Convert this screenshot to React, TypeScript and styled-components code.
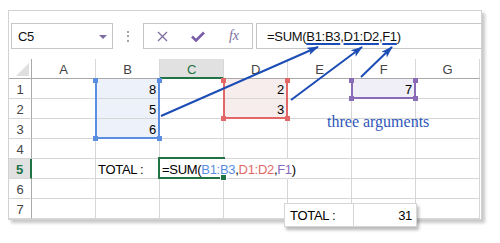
import React from "react";
import styled, { createGlobalStyle, css } from "styled-components";

const GlobalStyle = createGlobalStyle`
  html, body { margin: 0; padding: 0; background: #ffffff; }
  body { font-family: "Liberation Sans", Arial, sans-serif; }
`;

const C = {
  grid: "#d6d6d6",
  head: "#a9a9a9",
  green: "#217346",
  blue: "#5b8ee1",
  red: "#e26868",
  purple: "#8a6bb5",
  arrow: "#1c4cb5",
  icon: "#7d6d9e",
};

const FILL: Record<string, string> = {
  blue: "#edf1fa",
  red: "#f8eded",
  purple: "#f0eff7",
};

const Page = styled.div`
  position: relative;
  width: 500px;
  height: 243px;
  padding: 10px 0 0 8px;
  box-sizing: border-box;
  overflow: hidden;
`;

const Window = styled.div`
  width: 474px;
  border: 1px solid #d2d2d2;
  box-sizing: border-box;
  background: #fff;
  box-shadow: 3px 3px 3px rgba(0, 0, 0, 0.22);
`;

const FormulaBar = styled.div`
  display: flex;
  align-items: flex-start;
  height: 48px;
  padding: 12px 0 10px 2px;
  box-sizing: border-box;
`;

const boxBase = css`
  height: 26px;
  border: 1px solid #c6c6c6;
  box-sizing: border-box;
  font-size: 13px;
  letter-spacing: -0.3px;
  color: #111;
`;

const NameBox = styled.div`
  ${boxBase};
  width: 102px;
  display: flex;
  align-items: center;
  justify-content: space-between;
  padding: 1px 5px 0 6px;
`;

const DropArrow = styled.span`
  width: 0;
  height: 0;
  border-left: 4px solid transparent;
  border-right: 4px solid transparent;
  border-top: 4px solid ${C.icon};
`;

const Separator = styled.div`
  width: 30px;
  height: 26px;
  display: flex;
  flex-direction: column;
  align-items: center;
  justify-content: center;
  gap: 2.5px;
`;

const Dot = styled.span`
  width: 2px;
  height: 2px;
  background: #a3a3a3;
`;

const ButtonsBox = styled.div`
  ${boxBase};
  width: 110px;
  display: flex;
`;

const BarButton = styled.div`
  flex: 1;
  display: flex;
  align-items: center;
  justify-content: center;
`;

const Fx = styled.span`
  font-family: "Liberation Serif", "Times New Roman", serif;
  font-style: italic;
  font-size: 14px;
  color: ${C.icon};
  letter-spacing: 0;
`;

const FormulaBox = styled.div`
  ${boxBase};
  flex: 1;
  margin-left: 3px;
  border-right: none;
  padding: 2px 0 0 10px;
  line-height: 22px;
  white-space: nowrap;
`;

const Under = styled.span`
  text-decoration: underline;
  text-decoration-color: ${C.arrow};
  text-decoration-thickness: 2px;
  text-underline-offset: 2px;
`;

const Grid = styled.div`
  position: relative;
  display: grid;
  grid-template-columns: 23px repeat(7, 64px);
  grid-auto-rows: 20px;
  font-size: 13px;
  letter-spacing: -0.3px;
`;

const cellBase = css`
  box-sizing: border-box;
  border-right: 1px solid ${C.grid};
  border-bottom: 1px solid ${C.grid};
  display: flex;
  white-space: nowrap;
`;

const Corner = styled.div`
  ${cellBase};
  position: relative;
  border-right-color: ${C.head};
  border-bottom-color: ${C.head};
  &::after {
    content: "";
    position: absolute;
    right: 2px;
    bottom: 2px;
    width: 0;
    height: 0;
    border-left: 13px solid transparent;
    border-bottom: 13px solid #dfdfdf;
  }
`;

const ColHead = styled.div<{ $active?: boolean }>`
  ${cellBase};
  align-items: center;
  justify-content: center;
  padding-top: 1px;
  color: #444;
  border-right-color: #d8d8d8;
  border-bottom-color: ${C.head};
  ${(p) =>
    p.$active &&
    css`
      background: #e1e1e1;
      color: ${C.green};
      border-bottom: 2px solid ${C.green};
      padding-top: 2px;
    `}
`;

const RowHead = styled.div<{ $active?: boolean }>`
  ${cellBase};
  align-items: center;
  justify-content: center;
  padding-top: 1px;
  color: #444;
  border-right-color: ${C.head};
  ${(p) =>
    p.$active &&
    css`
      background: #e1e1e1;
      color: ${C.green};
      font-weight: bold;
      border-right: 2px solid ${C.green};
    `}
`;

const Cell = styled.div<{ $fill?: string; $align?: "left" | "right"; $hideRight?: boolean }>`
  ${cellBase};
  align-items: flex-end;
  line-height: 16px;
  color: #000;
  background: ${(p) => (p.$fill ? FILL[p.$fill] : "transparent")};
  justify-content: ${(p) => (p.$align === "right" ? "flex-end" : "flex-start")};
  padding: 0 3px 0 2px;
  ${(p) => p.$hideRight && css`border-right-color: transparent;`}
`;

const RangeBox = styled.div<{ $color: string }>`
  position: absolute;
  box-sizing: border-box;
  border: 2px solid ${(p) => p.$color};
  border-top: none;
  pointer-events: none;
`;

const Handle = styled.span<{ $color: string; $v: "top" | "bottom"; $h: "left" | "right" }>`
  position: absolute;
  width: 5px;
  height: 5px;
  background: ${(p) => p.$color};
  ${(p) => (p.$v === "top" ? "top: 0;" : "bottom: -4px;")}
  ${(p) => (p.$h === "left" ? "left: -4px;" : "right: -4px;")}
`;

const ActiveBox = styled.div`
  position: absolute;
  box-sizing: border-box;
  border: 2px solid ${C.green};
  border-right: none;
  pointer-events: none;
`;

const FillHandle = styled.span`
  position: absolute;
  right: -2px;
  bottom: -4px;
  width: 5px;
  height: 5px;
  background: ${C.green};
  border: 1px solid #fff;
  box-sizing: content-box;
`;

const Note = styled.div`
  position: absolute;
  left: 318px;
  top: 55px;
  font-family: "Liberation Serif", "Times New Roman", serif;
  font-size: 16px;
  line-height: 16px;
  color: #2f57ba;
  letter-spacing: 0;
  white-space: nowrap;
`;

const Popup = styled.div`
  position: absolute;
  left: 284px;
  top: 203px;
  width: 133px;
  height: 24px;
  box-sizing: border-box;
  display: grid;
  grid-template-columns: 68px 1fr;
  background: #fff;
  border: 1px solid #d6d6d6;
  box-shadow: 2px 3px 3px rgba(0, 0, 0, 0.28);
  font-size: 13px;
  letter-spacing: -0.3px;
  color: #000;
`;

const PopCell = styled.div<{ $align?: "left" | "right" }>`
  display: flex;
  align-items: center;
  padding: 1px 4px 0 5px;
  justify-content: ${(p) => (p.$align === "right" ? "flex-end" : "flex-start")};
  & + & {
    border-left: 1px solid #d6d6d6;
  }
`;

const Arrows = styled.svg`
  position: absolute;
  left: 0;
  top: 0;
  pointer-events: none;
`;

const Seg = styled.span<{ $c?: string }>`
  color: ${(p) => p.$c || "inherit"};
`;

type CellData = { v?: React.ReactNode; align?: "left" | "right"; fill?: string; hideRight?: boolean };

const COLS = ["A", "B", "C", "D", "E", "F", "G"];

const cellFormula = (
  <>
    =SUM(<Seg $c={C.blue}>B1:B3</Seg>,<Seg $c={C.red}>D1:D2</Seg>,<Seg $c={C.purple}>F1</Seg>)
  </>
);

const DATA: Record<number, Record<string, CellData>> = {
  1: { B: { v: "8", align: "right", fill: "blue" }, D: { v: "2", align: "right", fill: "red" }, F: { v: "7", align: "right", fill: "purple" } },
  2: { B: { v: "5", align: "right", fill: "blue" }, D: { v: "3", align: "right", fill: "red" } },
  3: { B: { v: "6", align: "right", fill: "blue" } },
  4: {},
  5: { B: { v: "TOTAL :" }, C: { v: cellFormula, hideRight: true }, D: { hideRight: true } },
  6: {},
  7: {},
};

const RANGES = [
  { c: 1, r: 0, w: 1, h: 3, color: C.blue },
  { c: 3, r: 0, w: 1, h: 2, color: C.red },
  { c: 5, r: 0, w: 1, h: 1, color: C.purple },
];

const ARROWS = [
  [161, 116, 318, 47],
  [291, 100, 362, 47],
  [361, 77, 392, 47],
];

export default function App() {
  return (
    <>
      <GlobalStyle />
      <Page>
        <Window>
          <FormulaBar>
            <NameBox>
              <span>C5</span>
              <DropArrow />
            </NameBox>
            <Separator>
              <Dot />
              <Dot />
              <Dot />
            </Separator>
            <ButtonsBox>
              <BarButton>
                <svg width="11" height="11" viewBox="0 0 11 11">
                  <path d="M1 1 L10 10 M10 1 L1 10" stroke={C.icon} strokeWidth="1.3" fill="none" />
                </svg>
              </BarButton>
              <BarButton>
                <svg width="14" height="11" viewBox="0 0 14 11">
                  <path d="M1 5.5 L5 9.5 L13 1.5" stroke="#7a5ea8" strokeWidth="2.6" fill="none" strokeLinejoin="miter" />
                </svg>
              </BarButton>
              <BarButton>
                <Fx>fx</Fx>
              </BarButton>
            </ButtonsBox>
            <FormulaBox>
              =SUM(<Under>B1:B3</Under>,<Under>D1:D2</Under>,<Under>F1</Under>)
            </FormulaBox>
          </FormulaBar>
          <Grid>
            <Corner />
            {COLS.map((c) => (
              <ColHead key={c} $active={c === "C"}>
                {c}
              </ColHead>
            ))}
            {[1, 2, 3, 4, 5, 6, 7].map((r) => (
              <React.Fragment key={r}>
                <RowHead $active={r === 5}>{r}</RowHead>
                {COLS.map((c) => {
                  const d = DATA[r][c] || {};
                  return (
                    <Cell key={c} $fill={d.fill} $align={d.align} $hideRight={d.hideRight}>
                      {d.v}
                    </Cell>
                  );
                })}
              </React.Fragment>
            ))}
            {RANGES.map((g, i) => (
              <RangeBox
                key={i}
                $color={g.color}
                style={{ left: 22 + 64 * g.c, top: 19 + 20 * g.r, width: 64 * g.w + 1, height: 20 * g.h + 1 }}
              >
                <Handle $color={g.color} $v="top" $h="left" />
                <Handle $color={g.color} $v="top" $h="right" />
                <Handle $color={g.color} $v="bottom" $h="left" />
                <Handle $color={g.color} $v="bottom" $h="right" />
              </RangeBox>
            ))}
            <ActiveBox style={{ left: 149, top: 98, width: 67, height: 22 }}>
              <FillHandle />
            </ActiveBox>
            <Note>three arguments</Note>
          </Grid>
        </Window>
        <Popup>
          <PopCell>TOTAL :</PopCell>
          <PopCell $align="right">31</PopCell>
        </Popup>
        <Arrows width="500" height="243" viewBox="0 0 500 243">
          <defs>
            <marker id="ah" viewBox="0 0 12 8" refX="11" refY="4" markerWidth="12" markerHeight="8" markerUnits="userSpaceOnUse" orient="auto">
              <path d="M0 0 L12 4 L0 8 L3 4 Z" fill={C.arrow} />
            </marker>
          </defs>
          {ARROWS.map(([x1, y1, x2, y2], i) => (
            <line key={i} x1={x1} y1={y1} x2={x2} y2={y2} stroke={C.arrow} strokeWidth="2" markerEnd="url(#ah)" />
          ))}
        </Arrows>
      </Page>
    </>
  );
}
